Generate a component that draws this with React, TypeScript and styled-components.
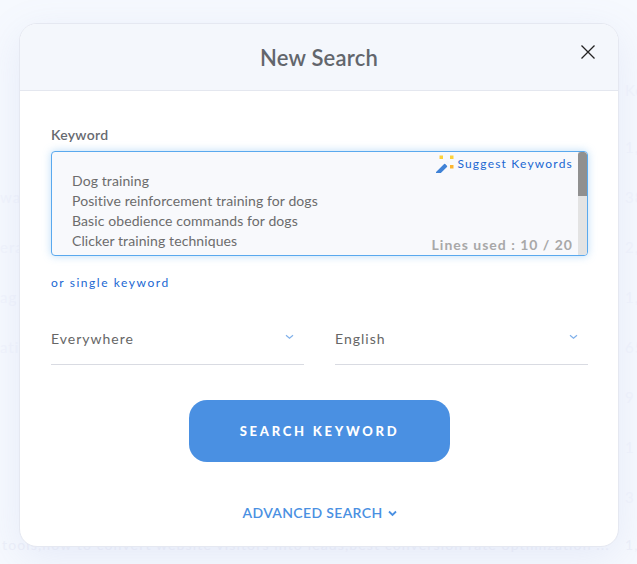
import React from "react";
import styled, { createGlobalStyle } from "styled-components";

const Global = createGlobalStyle`
  html, body { margin: 0; padding: 0; height: 100%; background: #f6f9fe; overflow: hidden; }
  body { font-family: Lato, "Noto Sans", Arial, sans-serif; }
  #root { height: 100%; }
`;

const Page = styled.div`
  position: relative;
  width: 637px;
  height: 564px;
  overflow: hidden;
  background: #f6f9fe;
`;

const BackdropTable = styled.div`
  display: flex;
  flex-direction: column;
  padding-top: 65px;
`;

const BackdropRow = styled.div<{ $head?: boolean }>`
  display: flex;
  justify-content: space-between;
  height: ${(p) => (p.$head ? "57px" : "50px")};
  line-height: 50px;
  font-size: 15px;
  letter-spacing: 1px;
  color: #f1f4fc;
  white-space: nowrap;
`;

const BackdropFoot = styled.div`
  position: absolute;
  left: 2px;
  right: 0;
  top: 536px;
  display: flex;
  justify-content: space-between;
  font-size: 14px;
  letter-spacing: 1.15px;
  color: #edf0f9;
  white-space: nowrap;
`;

const BackdropNum = styled.span`
  width: 12px;
  overflow: hidden;
  flex: none;
`;

const Modal = styled.div`
  position: absolute;
  left: 19px;
  top: 23px;
  width: 598px;
  height: 522px;
  display: flex;
  flex-direction: column;
  background: #fff;
  border: 1px solid #e5e8f1;
  border-radius: 18px;
  box-shadow: 0 10px 40px rgba(120, 140, 210, 0.13);
  overflow: hidden;
`;

const Header = styled.header`
  position: relative;
  flex: none;
  height: 66px;
  display: flex;
  align-items: center;
  justify-content: center;
  background: #f4f7fc;
  border-bottom: 1px solid #e4e7ef;
`;

const Title = styled.h2`
  margin: 0;
  font-size: 22px;
  font-weight: 600;
  color: #62666c;
  letter-spacing: 0.2px;
`;

const Close = styled.button`
  position: absolute;
  right: 22px;
  top: 20px;
  width: 16px;
  height: 16px;
  padding: 0;
  border: 0;
  background: none;
  display: flex;
`;

const Body = styled.div`
  flex: 1;
  display: flex;
  flex-direction: column;
  padding: 35px 30px 0 31px;
`;

const Label = styled.label`
  font-size: 14px;
  line-height: 17px;
  font-weight: 600;
  color: #676a70;
  letter-spacing: 0.3px;
  margin-bottom: 8px;
`;

const TextBox = styled.div`
  position: relative;
  box-sizing: border-box;
  height: 105px;
  border: 1px solid #5aa9ee;
  border-radius: 4px;
  background: #f8f9fc;
  box-shadow: 0 0 8px rgba(90, 169, 238, 0.4);
  overflow: hidden;
`;

const Lines = styled.div`
  height: 98px;
  box-sizing: border-box;
  padding: 19px 0 0 20px;
  overflow: hidden;
  font-size: 14px;
  line-height: 20px;
  letter-spacing: 0.1px;
  color: #6c6c6c;
`;

const ScrollTrack = styled.div`
  position: absolute;
  top: 0;
  right: 0;
  bottom: 0;
  width: 9px;
  background: #e3e3e3;
`;

const ScrollThumb = styled.div`
  height: 44px;
  background: #909090;
  border-radius: 3px 3px 0 0;
`;

const Suggest = styled.a`
  position: absolute;
  top: 3px;
  right: 14px;
  display: flex;
  align-items: center;
  gap: 3px;
  font-size: 12px;
  line-height: 18px;
  letter-spacing: 1.2px;
  color: #2067d2;
`;

const Used = styled.span`
  position: absolute;
  right: 14px;
  bottom: 1px;
  font-size: 14px;
  line-height: 18px;
  font-weight: 700;
  letter-spacing: 1px;
  color: #a8a8a8;
`;

const SingleLink = styled.a`
  margin-top: 19px;
  font-size: 12px;
  line-height: 16px;
  letter-spacing: 1.55px;
  color: #2067d2;
`;

const SelectRow = styled.div`
  display: grid;
  grid-template-columns: 253px 253px;
  column-gap: 31px;
  margin-top: 25px;
`;

const Select = styled.div`
  height: 49px;
  box-sizing: border-box;
  display: flex;
  align-items: center;
  justify-content: space-between;
  padding: 0 10px 4px 0;
  border-bottom: 1px solid #d9dbe2;
  font-size: 14px;
  letter-spacing: 1px;
  color: #666;
`;

const SelectChevron = styled.svg`
  margin-top: -3px;
  flex: none;
`;

const SearchButton = styled.button`
  align-self: center;
  margin-top: 35px;
  width: 261px;
  height: 62px;
  border: 0;
  border-radius: 18px;
  background: #4a90e2;
  color: #fff;
  font-family: inherit;
  font-size: 13px;
  font-weight: 900;
  letter-spacing: 2.75px;
`;

const Advanced = styled.a`
  align-self: center;
  margin-top: 42px;
  display: flex;
  align-items: center;
  gap: 5px;
  font-size: 14px;
  line-height: 18px;
  font-weight: 600;
  letter-spacing: 0.35px;
  color: #4a90e2;
`;

const Wand = () => (
  <svg width="18" height="18" viewBox="0 0 18 18">
    <rect x="-1" y="12.5" width="13" height="4" rx="0.8" transform="rotate(-45 5.5 14.5)" fill="#3f82d6" />
    <rect x="9.8" y="5.6" width="3.4" height="3.4" transform="rotate(-45 11.5 7.3)" fill="#f3f6fb" />
    <rect x="3.5" y="0.5" width="3.5" height="3.5" fill="#fdd23a" />
    <rect x="14" y="0.5" width="3.5" height="3.5" fill="#fdd23a" />
    <rect x="14" y="10" width="3.5" height="3.5" fill="#fdb52f" />
  </svg>
);

const keywords = [
  "Dog training",
  "Positive reinforcement training for dogs",
  "Basic obedience commands for dogs",
  "Clicker training techniques",
];

const rows: [string, string, boolean?][] = [
  ["", "Ke", true],
  ["", "1,"],
  ["wa", "38"],
  ["era", "2,"],
  ["ag", "1,"],
  ["ati", "65"],
  ["", "9"],
  ["", "1"],
  ["", "3"],
];

const Chevron = () => (
  <SelectChevron width="9" height="6" viewBox="0 0 9 6" fill="none">
    <path d="M1 1.2 4.5 4.2 8 1.2" stroke="#7fb0ea" strokeWidth="1.2" />
  </SelectChevron>
);

export default function App() {
  return (
    <Page>
      <Global />
      <BackdropTable>
        {rows.map(([a, b, head], i) => (
          <BackdropRow key={i} $head={head}>
            <span>{a}</span>
            <BackdropNum>{b}</BackdropNum>
          </BackdropRow>
        ))}
      </BackdropTable>
      <BackdropFoot>
        <span>tools,how to convert website visitors into leads,best conversion rate optimization ...</span>
        <BackdropNum>1,</BackdropNum>
      </BackdropFoot>
      <Modal>
        <Header>
          <Title>New Search</Title>
          <Close aria-label="Close">
            <svg width="16" height="16" viewBox="0 0 16 16" fill="none">
              <path d="M1.5 1.5 14.5 14.5M14.5 1.5 1.5 14.5" stroke="#222" strokeWidth="1.3" />
            </svg>
          </Close>
        </Header>
        <Body>
          <Label>Keyword</Label>
          <TextBox>
            <Lines>
              {keywords.map((k) => (
                <div key={k}>{k}</div>
              ))}
            </Lines>
            <ScrollTrack>
              <ScrollThumb />
            </ScrollTrack>
            <Suggest>
              <Wand />
              Suggest Keywords
            </Suggest>
            <Used>Lines used : 10 / 20</Used>
          </TextBox>
          <SingleLink>or single keyword</SingleLink>
          <SelectRow>
            <Select>
              Everywhere
              <Chevron />
            </Select>
            <Select>
              English
              <Chevron />
            </Select>
          </SelectRow>
          <SearchButton>SEARCH KEYWORD</SearchButton>
          <Advanced>
            ADVANCED SEARCH
            <svg width="9" height="7" viewBox="0 0 9 7" fill="none">
              <path d="M1 1.5 4.5 5 8 1.5" stroke="#4a90e2" strokeWidth="1.8" />
            </svg>
          </Advanced>
        </Body>
      </Modal>
    </Page>
  );
}
